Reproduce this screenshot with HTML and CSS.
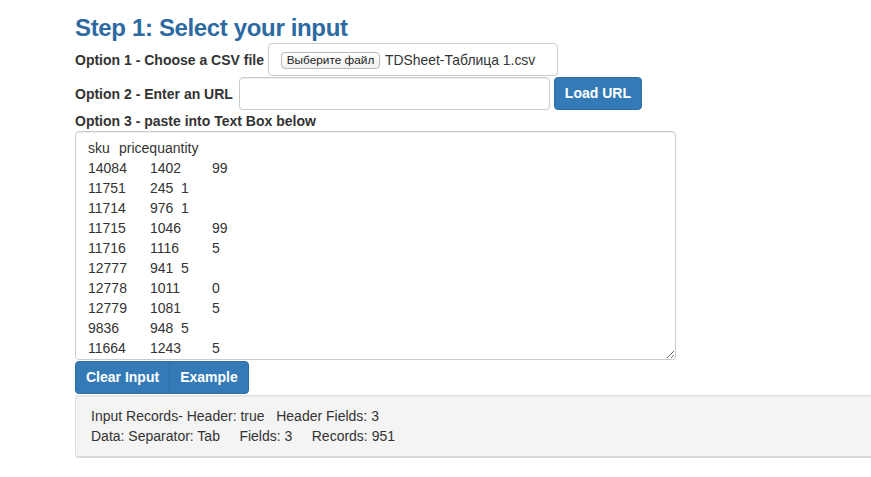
FILE: index.html
```html
<!DOCTYPE html>
<html lang="en">
<head>
<meta charset="utf-8">
<title>Step 1: Select your input</title>
<link rel="stylesheet" href="styles.css">
</head>
<body>
<main class="page">
  <h3 class="step-title">Step 1: Select your input</h3>

  <div class="row row-file">
    <label class="opt-label">Option 1 - Choose a CSV file</label>
    <div class="file-box">
      <button type="button" class="file-btn">Выберите файл</button>
      <span class="file-name">TDSheet-Таблица 1.csv</span>
    </div>
  </div>

  <div class="row row-url">
    <label class="opt-label">Option 2 - Enter an URL</label>
    <input type="text" class="url-input">
    <button type="button" class="btn btn-primary btn-load">Load URL</button>
  </div>

  <label class="opt-label opt-block">Option 3 - paste into Text Box below</label>
  <textarea class="data-box" spellcheck="false">sku	pricequantity
14084	1402	99
11751	245	1
11714	976	1
11715	1046	99
11716	1116	5
12777	941	5
12778	1011	0
12779	1081	5
9836	948	5
11664	1243	5
11665	1250	5
11666	1260	5</textarea>

  <div class="btn-group">
    <button type="button" class="btn btn-primary btn-first">Clear Input</button><button type="button" class="btn btn-primary btn-last">Example</button>
  </div>

  <div class="well">
    <div class="well-line">Input Records- Header: true   Header Fields: 3</div>
    <div class="well-line">Data: Separator: Tab     Fields: 3     Records: 951</div>
  </div>
</main>
</body>
</html>
```

FILE: styles.css
```css
html, body {
  margin: 0;
  padding: 0;
  overflow: hidden;
  background: #ffffff;
}

body {
  font-family: "Liberation Sans", Arial, Helvetica, sans-serif;
  font-size: 14px;
  line-height: 20px;
  color: #333333;
}

.page {
  padding-left: 75px;
  width: 860px;
}

.step-title {
  margin: 15px 0 2px 0;
  font-size: 24px;
  line-height: 26px;
  font-weight: bold;
  color: #2c6aa1;
  letter-spacing: -0.35px;
}

.row {
  display: flex;
  align-items: center;
  gap: 4px;
}

.row-url {
  margin-top: 1px;
}

.opt-label {
  font-weight: bold;
  font-size: 14px;
  line-height: 20px;
}

.opt-block {
  display: block;
  padding-top: 1px;
}

.file-box {
  box-sizing: border-box;
  width: 290px;
  height: 33px;
  border: 1px solid #cccccc;
  border-radius: 4px;
  padding: 0 12px;
  display: flex;
  align-items: center;
  gap: 5px;
  background: #fff;
}

.file-btn {
  box-sizing: border-box;
  height: 17px;
  width: 99px;
  padding: 0;
  margin: 1px 0 0 0;
  font-family: "Liberation Sans", Arial, sans-serif;
  font-size: 11.8px;
  line-height: 15px;
  color: #222;
  background: linear-gradient(#ffffff, #f0f0f0);
  border: 1px solid #b9b9b9;
  border-radius: 4px;
}

.file-name {
  font-size: 13.9px;
  color: #333;
  white-space: nowrap;
}

.url-input {
  box-sizing: border-box;
  width: 311px;
  height: 33px;
  margin: 0 0 0 2px;
  padding: 6px 12px;
  border: 1px solid #cccccc;
  border-radius: 4px;
  box-shadow: inset 0 1px 1px rgba(0, 0, 0, 0.075);
  font-family: inherit;
  font-size: 14px;
}

.btn {
  box-sizing: border-box;
  height: 33px;
  margin: 0;
  padding: 6px 10px;
  font-family: "Liberation Sans", Arial, sans-serif;
  font-size: 14px;
  font-weight: bold;
  line-height: 19px;
  border: 1px solid #2e6da4;
  border-radius: 4px;
  white-space: nowrap;
}

.btn-load {
  width: 88px;
  padding: 6px 0;
}

.btn-primary {
  background: #337ab7;
  color: #ffffff;
}

.data-box {
  display: block;
  box-sizing: border-box;
  width: 601px;
  height: 229px;
  margin: 0;
  padding: 6px 12px;
  border: 1px solid #cccccc;
  border-radius: 4px;
  box-shadow: inset 0 1px 1px rgba(0, 0, 0, 0.075);
  font-family: "Liberation Sans", Arial, sans-serif;
  font-size: 14px;
  line-height: 20px;
  color: #333;
  tab-size: 31px;
  overflow: hidden;
  resize: vertical;
}

.btn-group {
  display: flex;
  margin-top: 1px;
}

.btn-first {
  border-top-right-radius: 0;
  border-bottom-right-radius: 0;
}

.btn-last {
  margin-left: -1px;
  border-top-left-radius: 0;
  border-bottom-left-radius: 0;
}

.well {
  box-sizing: border-box;
  width: 830px;
  margin-top: 1px;
  padding: 10px 15px;
  background: #f4f4f4;
  border: 1px solid #e0e0e0;
  border-bottom: 2px solid #dadada;
  border-radius: 3px 0 0 3px;
  box-shadow: inset 0 1px 1px rgba(0, 0, 0, 0.05);
}

.well-line {
  white-space: pre;
  line-height: 20px;
}
```
